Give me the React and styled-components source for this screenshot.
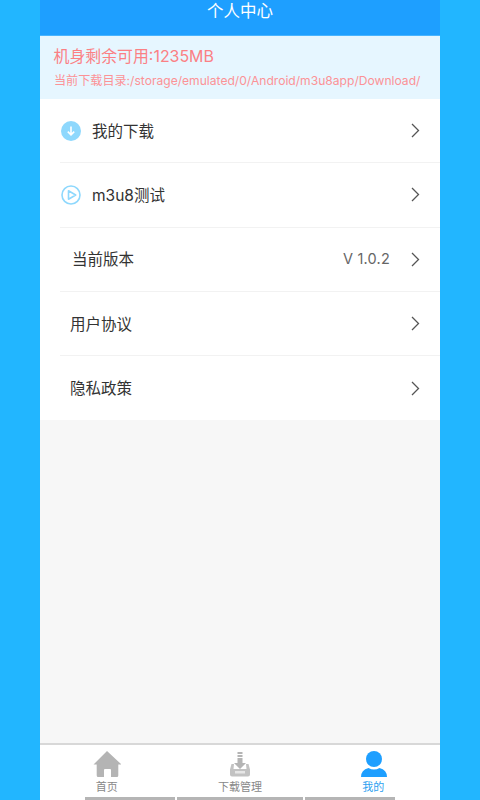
import React from "react";
import styled, { createGlobalStyle } from "styled-components";

const Global = createGlobalStyle`
  html, body { margin: 0; padding: 0; background: #22b6ff; }
  body { font-family: "Inter", "Noto Sans CJK SC", sans-serif; }
  * { box-sizing: border-box; }
`;
const Phone = styled.div`
  width: 400px; height: 800px; margin: 0 auto; background: #f7f7f7;
  display: flex; flex-direction: column; overflow: hidden;
`;
const Header = styled.header`
  height: 36px; flex: none; background: #1e9fff; border-bottom: 1px solid #48b4ff;
  color: #fff; font-size: 16.5px; line-height: 22px; text-align: center;
`;
const Info = styled.section`
  height: 63px; flex: none; background: #e6f6ff; padding: 10px 0 0 14px; color: #fb8084;
`;
const Free = styled.div`font-size: 15.9px; line-height: 22px; margin-left: -0.5px;`;
const Path = styled.div`font-size: 12.1px; line-height: 18px; margin-top: 4px; white-space: nowrap; color: #fc9296;`;
const List = styled.ul`list-style: none; margin: 0; padding: 0 0 0 20px; background: #fff; flex: none;`;
const Row = styled.li`
  height: 64.3px; display: flex; align-items: center; padding: 0 20px 2px 0;
  border-bottom: ${p => (p.$last ? "none" : "1px solid #f2f2f2")};
  color: #333; font-size: 15.5px;
  & > svg { margin-top: 2px; flex: none; }
  & > svg:first-child { margin-left: 1px; }
`;
const Label = styled.span`
  flex: 1; margin-left: ${p => p.$indent}px;
`;
const Version = styled.span`font-size: 14.5px; color: #666; margin-right: 21px; letter-spacing: .2px;`;
const Spacer = styled.div`flex: 1;`;
const Tabs = styled.nav`
  height: 57px; flex: none; background: #fff; border-top: 2px solid #d8d8d8;
  display: grid; grid-template-columns: repeat(3, 1fr);
`;
const Tab = styled.div`
  display: flex; flex-direction: column; align-items: center; position: relative;
  padding-top: 6px; font-size: 11px; line-height: 14px; color: ${p => (p.$active ? "#2d9ff0" : "#888")};
  & > svg { display: block; height: 26px; margin-left: ${p => (p.$active ? 1 : 0)}px; }
  & > span { margin-top: 3px; }
`;
const Bar = styled.i`
  position: absolute; bottom: 0; height: 3px; background: #b5b5b5; left: ${p => p.$l}px; right: ${p => p.$r}px;
`;

const Chevron = () => (
  <svg width="9" height="15" viewBox="0 0 9 15" fill="none" stroke="#555" strokeWidth="1.3"><path d="M1 1l6.500 6.500L1 14" /></svg>
);
const DownIcon = () => (
  <svg width="20" height="20" viewBox="0 0 20 20"><circle cx="10" cy="10" r="10" fill="#8ed8fd" /><path d="M10 5.500v8M6.800 10.600l3.200 3.200 3.200-3.200" fill="none" stroke="#fff" strokeWidth="1.6" /></svg>
);
const PlayIcon = () => (
  <svg width="20" height="20" viewBox="0 0 20 20" fill="none" stroke="#8ed8fd"><circle cx="10" cy="10" r="9" strokeWidth="1.6" /><path d="M7.500 5.800l7.200 4.200-7.200 4.200z" strokeWidth="1.6" strokeLinejoin="round" /></svg>
);
const HomeIcon = () => (
  <svg width="28" height="26" viewBox="0 0 28 26" fill="#b4b4b4"><path d="M14 0L.5 13.500h3.200v11q0 1.500 1.500 1.500h5.800v-7q0-1 1-1h5q1 0 1 1v7h5.800q1.500 0 1.500-1.500v-11h3.200z" /></svg>
);
const DownloadIcon = () => (
  <svg width="20" height="26" viewBox="0 0 20 26" fill="#c2c2c2"><path d="M7.500 1h5v2h-5zM7.500 4h5v2h-5zM7.500 7h5v5h3.500L10 18 4 12h3.500z" fill="#b4b4b4" /><path d="M1.500 13H4L3.500 18h13L16 13h2.500L20 18.500v5q0 2-2 2H2q-2 0-2-2v-5z" /><path d="M5 20h10v2.500H5z" fill="#e6e6e6" /></svg>
);
const UserIcon = () => (
  <svg width="28" height="26" viewBox="0 0 28 26" fill="#1e9fff"><circle cx="14" cy="8" r="8" /><path d="M1 26q0-7 7.500-9 5.500 3 11 0Q27 19 27 26z" /></svg>
);

const items = [
  { label: "我的下载", icon: <DownIcon />, indent: 11 },
  { label: "m3u8测试", icon: <PlayIcon />, indent: 11 },
  { label: "当前版本", indent: 12, version: "V 1.0.2" },
  { label: "用户协议", indent: 10 },
  { label: "隐私政策", indent: 10, last: true },
];

export default function App() {
  return (
    <>
      <Global />
      <Phone>
        <Header>个人中心</Header>
        <Info>
          <Free>机身剩余可用:1235MB</Free>
          <Path>当前下载目录:/storage/emulated/0/Android/m3u8app/Download/</Path>
        </Info>
        <List>
          {items.map(it => (
            <Row key={it.label} $last={it.last}>
              {it.icon}
              <Label $indent={it.indent}>{it.label}</Label>
              {it.version && <Version>{it.version}</Version>}
              <Chevron />
            </Row>
          ))}
        </List>
        <Spacer />
        <Tabs>
          <Tab><HomeIcon /><span>首页</span><Bar $l={45} $r={-2} /></Tab>
          <Tab><DownloadIcon /><span>下载管理</span><Bar $l={4} $r={4} /></Tab>
          <Tab $active><UserIcon /><span>我的</span><Bar $l={-2} $r={45} /></Tab>
        </Tabs>
      </Phone>
    </>
  );
}
